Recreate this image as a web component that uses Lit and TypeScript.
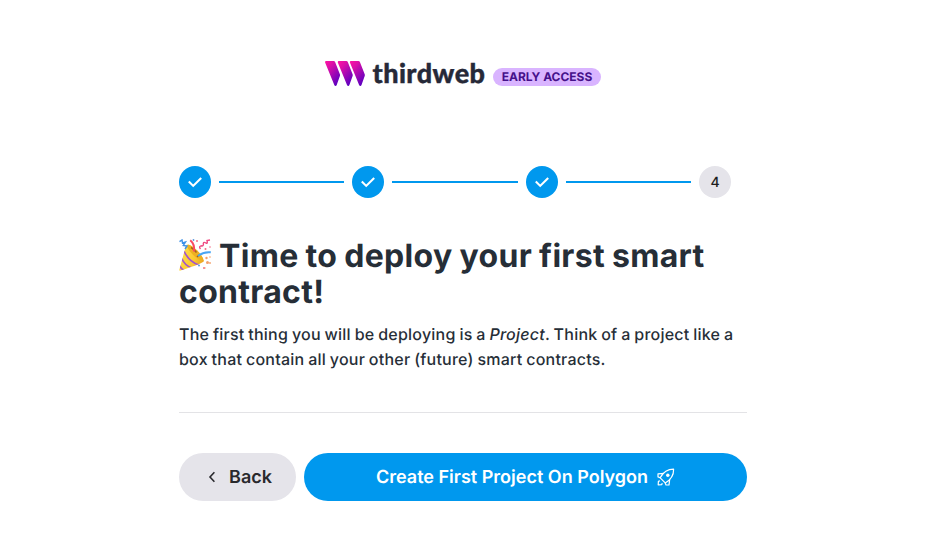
import { LitElement, html, css, svg } from "lit";
import { customElement } from "lit/decorators.js";

const check = html`<svg class="check" viewBox="0 0 16 16" width="16" height="16">
  <path d="M1.8 7.6 L6.2 11.9 L14.2 4" fill="none" stroke="#fff" stroke-width="2.1" />
</svg>`;

const stripes = [0, 12.7, 24.8];

@customElement("app-root")
export class AppRoot extends LitElement {
  static styles = css`
    :host {
      display: block;
      box-sizing: border-box;
      height: 551px;
      padding: 60px 190px 0 179px;
      background: #fff;
      color: #262e37;
      font-family: Inter, sans-serif;
      text-rendering: geometricPrecision;
      overflow: hidden;
    }
    * { box-sizing: border-box; }
    svg { display: block; flex: none; }
    .brand {
      display: flex;
      height: 26px;
      margin-left: 146px;
    }
    .badge {
      height: 18px;
      margin-top: 8px;
      width: 108px;
      border-radius: 9px;
      background: #d9b4ff;
      color: #45108a;
      font-size: 12px;
      font-weight: 700;
      line-height: 18px;
      text-align: center;
      white-space: nowrap;
    }
    .wordmark {
      width: 120.5px;
      margin-left: 5.5px;
      font-family: Lato, sans-serif;
      font-weight: 900;
      font-size: 27px;
      line-height: 25px;
      letter-spacing: 0.45px;
      color: #262938;
      -webkit-text-stroke: 0.4px #262938;
    }
    .steps {
      display: flex;
      align-items: center;
      gap: 8px;
      width: 552px;
      margin-top: 80px;
    }
    .step {
      display: flex;
      flex: none;
      align-items: center;
      justify-content: center;
      width: 32px;
      height: 32px;
      border-radius: 50%;
      background: #0098ee;
    }
    .step.next {
      background: #e5e4ea;
      color: #1c1c20;
      font-size: 14px;
      font-weight: 500;
    }
    .line { flex: 1; height: 2px; background: #0098ee; }
    h1 {
      margin: 40px 0 0;
      font-size: 32px;
      font-weight: 700;
      line-height: 36px;
      letter-spacing: 0.3px;
      word-spacing: -0.8px;
      white-space: nowrap;
    }
    .popper { display: inline-block; vertical-align: -4px; margin: -2px 8px 0 0; }
    p {
      margin: 12px 0 0;
      font-size: 16px;
      font-weight: 500;
      line-height: 25px;
      letter-spacing: 0.23px;
      word-spacing: -0.7px;
      white-space: nowrap;
    }
    hr {
      width: 568px;
      height: 1px;
      margin: 40px 0;
      border: 0;
      background: #e3e3e6;
    }
    .actions { display: flex; gap: 8px; width: 568px; }
    button {
      display: flex;
      align-items: center;
      justify-content: center;
      height: 48px;
      padding: 0;
      border: 0;
      border-radius: 24px;
      font-family: Inter, sans-serif;
      font-size: 18px;
      font-weight: 600;
      line-height: 24px;
      text-rendering: geometricPrecision;
      white-space: nowrap;
    }
    button span { margin-top: 2px; }
    .back { width: 117px; gap: 8px; background: #e5e4ea; color: #29292d; }
    .create { flex: 1; gap: 9px; background: #0098ee; color: #fff; }
  `;

  render() {
    return html`
      <div class="brand">
        <svg width="42" height="26" viewBox="0 0 42 26">
          <defs>
            <linearGradient id="ink" x1="0" y1="0" x2="0.7" y2="1">
              <stop offset="0" stop-color="#ff13a4" />
              <stop offset="0.3" stop-color="#dc0fa8" />
              <stop offset="1" stop-color="#5e00c0" />
            </linearGradient>
          </defs>
          ${stripes.map(
            (x) => svg`<path transform="translate(${x} 0)" fill="url(#ink)"
              d="M1.3 1H8.7C9.4 1 9.8 1.3 10.1 2L14.9 14.3C15.1 14.8 15.1 15.4 14.9 15.9L11.7 25C11.3 26.2 9.8 26.2 9.3 25L0.2 2.8C-0.2 1.9 0.3 1 1.3 1Z" />`
          )}
        </svg>
        <span class="wordmark">thirdweb</span>
        <span class="badge">EARLY ACCESS</span>
      </div>

      <div class="steps">
        <div class="step">${check}</div><div class="line"></div>
        <div class="step">${check}</div><div class="line"></div>
        <div class="step">${check}</div><div class="line"></div>
        <div class="step next">4</div>
      </div>

      <h1><svg class="popper" width="32" height="32" viewBox="0 0 32 32">
          <defs>
            <linearGradient id="gold" x1="0" y1="0.3" x2="1" y2="0.7">
              <stop offset="0" stop-color="#ffe34d" />
              <stop offset="0.55" stop-color="#fbc62f" />
              <stop offset="1" stop-color="#dd8c16" />
            </linearGradient>
            <clipPath id="cone"><path d="M0.4 30.5L7 6.5Q9 3.5 15.5 9.5Q24 17 25 22Q25 24 1.5 31.5Q0 32 .4 30.5Z" /></clipPath>
          </defs>
          <g clip-path="url(#cone)">
            <rect width="32" height="32" fill="url(#gold)" />
            <path d="M5 12Q10 23 20 26M2.5 19Q6 27 13 29M0 26Q2 30 6 32" fill="none" stroke="#a253cf" stroke-width="1.7" />
          </g>
          <ellipse cx="16" cy="13.5" rx="10.5" ry="3" transform="rotate(44 16 13.5)" fill="#eeb022" />
          <path d="M12 8.5Q15 10 17.5 13.5M18 18L20 16" fill="none" stroke="#a86215" stroke-width="1.5" />
          <path d="M14.8 12.5C15.7 8 14.5 4 11.2 1.3" fill="none" stroke="#fa4a61" stroke-width="2" />
          <path d="M19 17C22 14.5 26 12.7 31.8 13.3" fill="none" stroke="#48a5f4" stroke-width="2" />
          <path d="M0.5 2.7L3 1L3.5 4L6.5 3L4.3 6.5L8 7L6 10" fill="none" stroke="#3d91e7" stroke-width="1.4" />
          <path d="M21.5 10Q19.5 7.5 22 6.8Q25 7.5 24.3 4.5Q24.5 2.5 27 4Q29 5 28 1.5L31 1" fill="none" stroke="#ef4a82" stroke-width="1.4" />
          <g fill="#f46c86"><circle cx="18" cy="2" r="1" /><circle cx="26.5" cy="10" r="1" /><circle cx="31" cy="8" r=".8" /><circle cx="25" cy="29" r="1" /></g>
          <g fill="#f4a06a"><circle cx="27.5" cy="19" r="1.2" /><circle cx="28.5" cy="23.5" r="1.5" /><circle cx="31" cy="18" r=".8" /><circle cx="31" cy="24" r=".9" /><circle cx="26" cy="29" r=".7" /></g>
          <g fill="#5c97de"><circle cx="14.5" cy="1" r=".9" /><circle cx="20" cy="26.5" r="1" /></g>
        </svg>Time to deploy your first smart<br />contract!</h1>
      <p>The first thing you will be deploying is a <i>Project</i>. Think of a project like a<br />box that contain all your other (future) smart contracts.</p>
      <hr />

      <div class="actions">
        <button class="back">
          <svg width="18" height="18" viewBox="0 0 18 18">
            <path d="M11.4 4.3L7 9L11.4 13.7" fill="none" stroke="#29292d" stroke-width="1.6" />
          </svg>
          <span>Back</span>
        </button>
        <button class="create">
          <span>Create First Project On Polygon</span>
          <svg width="18" height="18" viewBox="0 0 18 18">
            <g fill="none" stroke="#fff" stroke-width="1.2" stroke-linejoin="round">
              <path d="M3.2 9.8C6 4.6 10.6 1.2 16.6 1.2C16.8 7.3 13.3 12 8.2 14.9Z" />
              <path d="M7 5.3L4.2 5.6L1 5.9L1 8.9L3.2 9.8M12.7 11L12.4 13.9L12 17L9 17L8.2 14.9" />
              <path d="M3 12.8L1.4 13.4L1.2 16.8L4.8 16.6L5.2 15.1" />
            </g>
            <circle cx="10.8" cy="7.2" r="1.7" fill="#fff" />
          </svg>
        </button>
      </div>
    `;
  }
}
